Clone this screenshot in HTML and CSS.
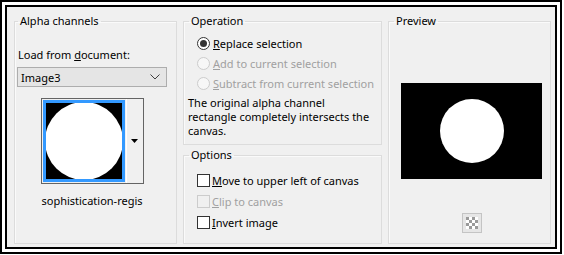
FILE: index.html
```html
<!DOCTYPE html>
<html lang="en">
<head>
  <meta charset="UTF-8">
  <title>Load Selection From Alpha Channel</title>
  <link rel="stylesheet" href="styles.css">
</head>
<body>

  <div class="frame">
    <div class="dialog">

      <fieldset class="group group-alpha">
        <legend>Alpha channels</legend>
        <label class="field-label" for="doc">Load from <u>d</u>ocument:</label>
        <div class="combo" id="doc">
          <span>Image3</span>
          <svg class="chevron" width="10" height="6" viewBox="0 0 10 6">
            <path d="M0.5 0.5 L5 5 L9.5 0.5" fill="none" stroke="#404040" stroke-width="1"/>
          </svg>
        </div>
        <div class="thumb-wrap">
          <div class="thumb-picker">
            <div class="thumb">
              <div class="thumb-sel">
                <div class="thumb-img"><div class="thumb-circle"></div></div>
              </div>
            </div>
            <div class="thumb-drop">
              <svg width="7" height="4" viewBox="0 0 7 4"><path d="M0 0 H7 L3.5 4 Z" fill="#000"/></svg>
            </div>
          </div>
          <div class="thumb-name">sophistication-regis</div>
        </div>
      </fieldset>

      <div class="column">
        <fieldset class="group group-op">
          <legend>Operation</legend>
          <div class="choices">
            <div class="choice"><span class="radio checked"></span><span><u>R</u>eplace selection</span></div>
            <div class="choice disabled"><span class="radio"></span><span><u>A</u>dd to current selection</span></div>
            <div class="choice disabled"><span class="radio"></span><span><u>S</u>ubtract from current selection</span></div>
          </div>
          <p class="note">The original alpha channel<br>rectangle completely intersects the canvas.</p>
        </fieldset>

        <fieldset class="group group-opt">
          <legend>Options</legend>
          <div class="checks">
            <div class="check"><span class="box"></span><span><u>M</u>ove to upper left of canvas</span></div>
            <div class="check disabled"><span class="box"></span><span><u>C</u>lip to canvas</span></div>
            <div class="check"><span class="box"></span><span><u>I</u>nvert image</span></div>
          </div>
        </fieldset>
      </div>

      <fieldset class="group group-preview">
        <legend>Preview</legend>
        <div class="preview">
          <div class="preview-circle"></div>
        </div>
        <div class="bg-toggle">
          <svg width="12" height="12" viewBox="0 0 12 12">
            <rect width="12" height="12" fill="#fff"/>
            <rect x="0" y="0" width="3" height="3" fill="#9a9a9a"/>
            <rect x="6" y="0" width="3" height="3" fill="#9a9a9a"/>
            <rect x="3" y="3" width="3" height="3" fill="#9a9a9a"/>
            <rect x="9" y="3" width="3" height="3" fill="#9a9a9a"/>
            <rect x="0" y="6" width="3" height="3" fill="#9a9a9a"/>
            <rect x="6" y="6" width="3" height="3" fill="#9a9a9a"/>
            <rect x="3" y="9" width="3" height="3" fill="#9a9a9a"/>
            <rect x="9" y="9" width="3" height="3" fill="#9a9a9a"/>
          </svg>
        </div>
      </fieldset>

    </div>
  </div>

</body>
</html>
```

FILE: styles.css
```css
body {
  margin: 0;
  background: #fff;
  font-family: "Noto Sans", sans-serif;
  font-size: 11px;
  color: #000;
}
.frame {
  width: 562px;
  height: 254px;
  box-sizing: border-box;
  border: 2px solid #000;
  padding: 3px;
  background: #fff;
}
.dialog {
  height: 100%;
  box-sizing: border-box;
  border: 2px solid #000;
  background: #f0f0f0;
  display: flex;
  gap: 6px;
  padding: 7px 0 3px 7px;
}
.group {
  margin: 0;
  min-width: 0;
  border: 1px solid #dcdcdc;
  box-shadow: inset 1px 1px 0 #fafafa;
  padding: 0;
  box-sizing: border-box;
}
.group legend {
  padding: 0 2px;
  margin-left: 1px;
  line-height: 14px;
}

/* alpha channels */
.group-alpha {
  width: 163px;
  padding: 0 2px;
}
.field-label {
  display: block;
  margin: 19px 0 0 1px;
  line-height: 16px;
}
.combo {
  margin-top: 4px;
  width: 150px;
  height: 20px;
  box-sizing: border-box;
  border: 1px solid #adadad;
  background: #e5e5e5;
  display: flex;
  align-items: center;
  justify-content: space-between;
  padding: 0 6px 0 3px;
}
.thumb-wrap {
  width: 102px;
  margin: 11px 0 0 24px;
  display: flex;
  flex-direction: column;
  align-items: center;
}
.thumb-picker {
  display: flex;
  border: 1px solid #646464;
}
.thumb {
  padding: 1px;
  background: #f0f0f0;
}
.thumb-sel {
  border: 3px solid #3399ff;
}
.thumb-img {
  width: 76px;
  height: 76px;
  background: #000;
  overflow: hidden;
}
.thumb-circle {
  width: 78px;
  height: 78px;
  margin: -1px 0 0 -1px;
  border-radius: 50%;
  background: #fff;
}
.thumb-drop {
  width: 17px;
  box-sizing: border-box;
  border-left: 1px solid #fff;
  background: #f0f0f0;
  display: flex;
  align-items: center;
  justify-content: center;
}
.thumb-name {
  margin-top: 9px;
  line-height: 16px;
  white-space: nowrap;
}

/* middle column */
.column {
  width: 199px;
  display: flex;
  flex-direction: column;
  gap: 3px;
}
.group-op {
  flex: 1;
  padding: 0 4px;
}
.choices {
  margin-top: 5px;
  padding-left: 9px;
}
.choice, .check {
  display: flex;
  align-items: center;
  gap: 3px;
  height: 20px;
}
.check {
  height: 21px;
  gap: 2px;
}
.disabled {
  color: #a0a0a0;
}
.radio {
  width: 13px;
  height: 13px;
  box-sizing: border-box;
  border: 1px solid #333;
  border-radius: 50%;
  background: #fff;
  display: flex;
  align-items: center;
  justify-content: center;
}
.radio.checked::after {
  content: "";
  width: 7px;
  height: 7px;
  border-radius: 50%;
  background: #333;
}
.disabled .radio {
  border-color: #cccccc;
  background: #f7f7f7;
}
.note {
  margin: 3px 0 0;
  line-height: 14px;
}
.group-opt {
  height: 96px;
  padding: 0 4px;
}
.checks {
  margin-top: 8px;
  padding-left: 9px;
}
.box {
  width: 13px;
  height: 13px;
  box-sizing: border-box;
  border: 1px solid #333;
  background: #fff;
}
.disabled .box {
  border-color: #cccccc;
  background: #f0f0f0;
}

/* preview */
.group-preview {
  width: 163px;
  padding: 0 0 0 4px;
  display: flex;
  flex-direction: column;
  align-items: center;
}
.preview {
  margin-top: 55px;
  width: 141px;
  height: 96px;
  background: #000;
  display: flex;
  align-items: center;
  justify-content: center;
}
.preview-circle {
  width: 64px;
  height: 64px;
  border-radius: 50%;
  background: #fff;
}
.bg-toggle {
  margin-top: 34px;
  width: 20px;
  height: 20px;
  box-sizing: border-box;
  border: 1px solid #c4c4c4;
  background: #e6e6e6;
  display: flex;
  align-items: center;
  justify-content: center;
}
```
